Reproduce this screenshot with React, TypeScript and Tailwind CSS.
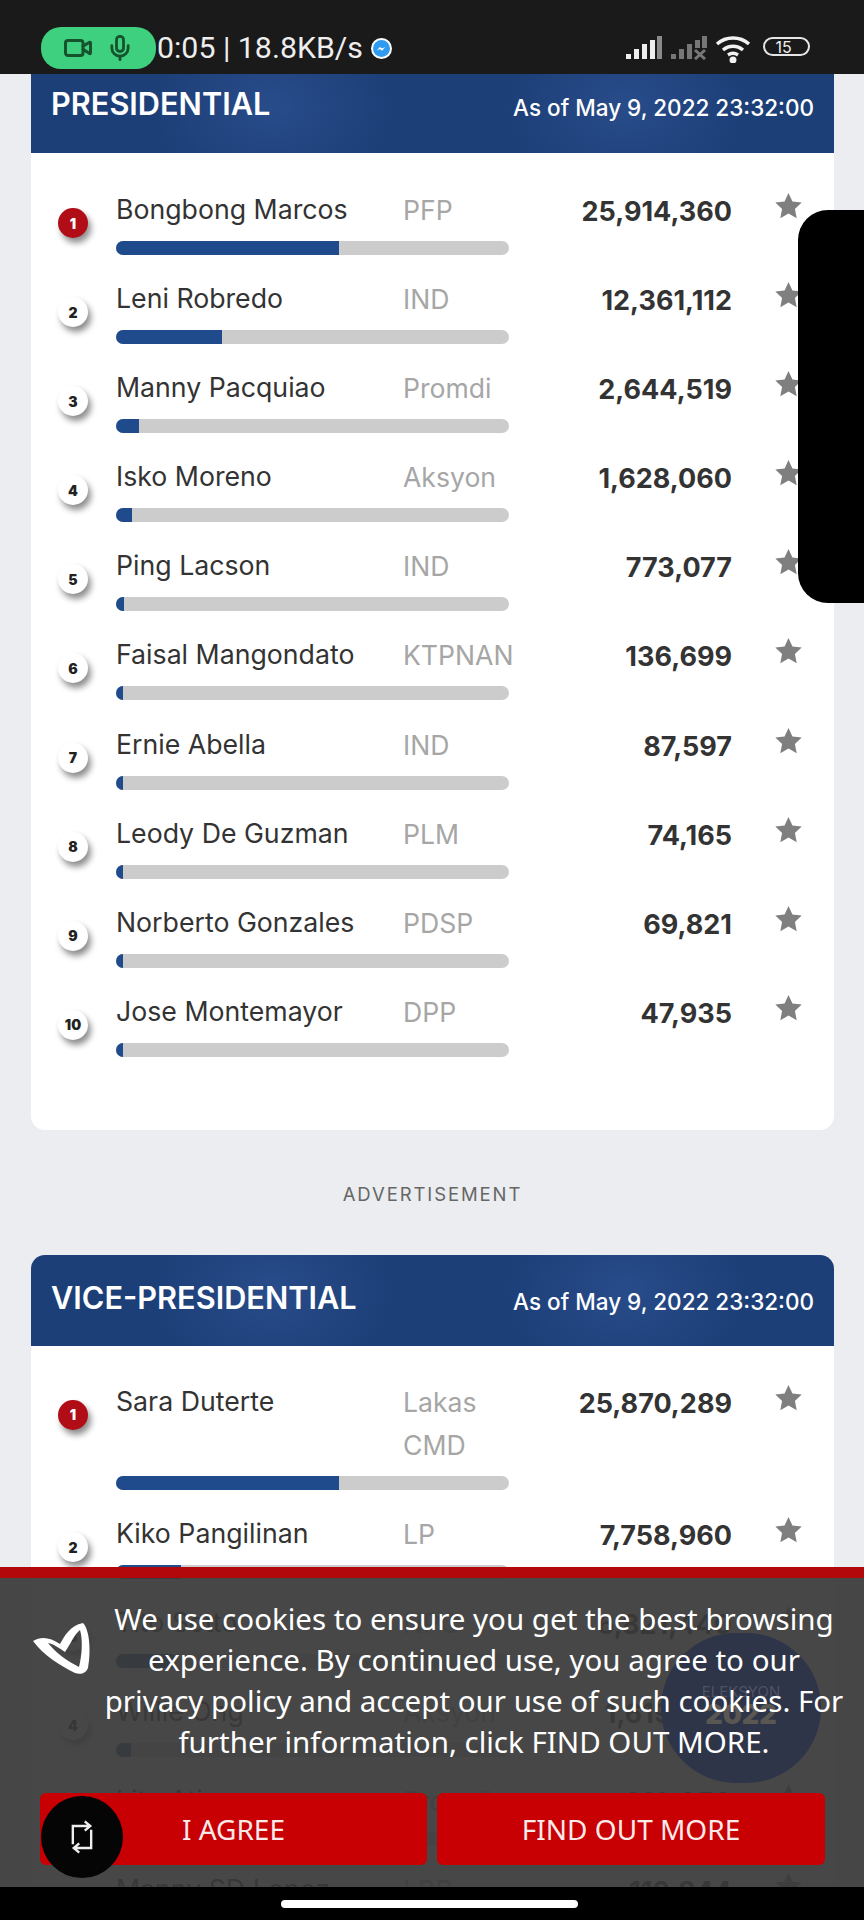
import { Mic, Video } from 'lucide-react';

const BAR_WIDTH = 393;

interface Candidate {
  name: string;
  party: string;
  votes: string;
  fill: number;
}

const presidential: Candidate[] = [
  { name: 'Bongbong Marcos', party: 'PFP', votes: '25,914,360', fill: 223 },
  { name: 'Leni Robredo', party: 'IND', votes: '12,361,112', fill: 106 },
  { name: 'Manny Pacquiao', party: 'Promdi', votes: '2,644,519', fill: 23 },
  { name: 'Isko Moreno', party: 'Aksyon', votes: '1,628,060', fill: 16 },
  { name: 'Ping Lacson', party: 'IND', votes: '773,077', fill: 8 },
  { name: 'Faisal Mangondato', party: 'KTPNAN', votes: '136,699', fill: 7 },
  { name: 'Ernie Abella', party: 'IND', votes: '87,597', fill: 7 },
  { name: 'Leody De Guzman', party: 'PLM', votes: '74,165', fill: 7 },
  { name: 'Norberto Gonzales', party: 'PDSP', votes: '69,821', fill: 7 },
  { name: 'Jose Montemayor', party: 'DPP', votes: '47,935', fill: 7 },
];

const vicePresidential: Candidate[] = [
  { name: 'Sara Duterte', party: 'Lakas CMD', votes: '25,870,289', fill: 223 },
  { name: 'Kiko Pangilinan', party: 'LP', votes: '7,758,960', fill: 65 },
  { name: 'Tito Sotto', party: 'NPC', votes: '6,821,440', fill: 58 },
  { name: 'Willie Ong', party: 'Aksyon', votes: '1,619,330', fill: 15 },
  { name: 'Lito Atienza', party: 'Promdi', votes: '210,250', fill: 8 },
  { name: 'Manny SD Lopez', party: 'LBP', votes: '112,844', fill: 7 },
];

const Star = () => (
  <svg viewBox="0 0 24 24" className="mt-[4px] ml-[43px] h-[27px] w-[27px] shrink-0 fill-[#7f7f7f]">
    <path d="M12 .8l3.5 7.6 8.2 1-6 5.7 1.6 8.2L12 19.200l-7.300 4.100 1.600-8.200-6-5.700 8.200-1z" />
  </svg>
);

const Row = ({ rank, candidate }: { rank: number; candidate: Candidate }) => {
  const first = rank === 1;
  return (
    <div className="mb-[22.1px] flex">
      <div
        className={
          'mt-[20px] flex h-[30px] w-[30px] shrink-0 items-center justify-center rounded-full text-[14px] font-black shadow-[3px_5px_6px_rgba(0,0,0,0.45)] ' +
          (first ? 'bg-[#b10d17] text-white' : 'bg-white text-[#222]')
        }
      >
        {rank}
      </div>
      <div className="ml-[28px] flex-1">
        <div className="flex">
          <div className="w-[287px] text-[26.7px] leading-[43px] text-[#333]">{candidate.name}</div>
          <div className="mt-[1px] -mb-[1px] w-[126px] text-[26.6px] leading-[43px] text-[#a6a6a6]">{candidate.party}</div>
          <div className="mt-[2px] -mb-[2px] w-[203px] text-right text-[27px] leading-[43px] font-bold text-[#333]">
            {candidate.votes}
          </div>
          <Star />
        </div>
        <div className="mt-[10px] h-[14px] overflow-hidden rounded-full bg-[#cccccc]" style={{ width: BAR_WIDTH }}>
          <div className="h-full bg-[#1f4a8c]" style={{ width: candidate.fill }} />
        </div>
      </div>
    </div>
  );
};

const Header = ({ title, tall, rounded }: { title: string; tall?: boolean; rounded?: boolean }) => (
  <div
    className={
      'flex justify-between bg-[#1d3f78] bg-[radial-gradient(ellipse_120px_90px_at_30%_40%,#284c8a,transparent),radial-gradient(ellipse_120px_90px_at_74%_40%,#284c8a,transparent)] pr-[20px] pl-[20px] text-white ' +
      (tall ? 'h-[91px] items-start pt-[25px] ' : 'h-[79px] items-start pt-[12px] ') +
      (rounded ? 'rounded-t-[14px]' : '')
    }
  >
    <div className="text-[30.7px] leading-[36px] font-semibold">{title}</div>
    <div className="pt-[4px] text-[22.5px] leading-[36px] font-medium">As of May 9, 2022 23:32:00</div>
  </div>
);

const StatusBar = () => (
  <div className="relative flex h-[74px] shrink-0 items-start bg-[#1a1a1a] pt-[27px] pl-[41px] text-white">
    <div className="flex h-[42px] w-[115px] items-center justify-center gap-[13px] rounded-[20px] bg-[#3fd07f] text-[#14532d]">
      <Video size={30} strokeWidth={2.4} />
      <Mic size={28} strokeWidth={2.4} />
    </div>
    <div className="ml-[1px] font-['Roboto',sans-serif] text-[30.3px] leading-[42px] text-[#eee]">0:05 | 18.8KB/s</div>
    <div className="mt-[11px] ml-[8px] flex h-[21px] w-[21px] items-center justify-center rounded-full bg-white">
      <svg viewBox="0 0 16 16" className="h-[17px] w-[17px]">
        <circle cx="8" cy="8" r="8" fill="#2f9bf0" />
        <path d="M3.500 10l3-3.500 2 1.500 3-1.500-3 3.500-2-1.500z" fill="#fff" />
      </svg>
    </div>
    <div className="ml-auto mt-[9px] mr-[54px] flex items-start">
      <svg viewBox="0 0 36 24" className="h-[24px] w-[36px]">
        <rect x="0" y="18" width="5" height="5" fill="#eee" />
        <rect x="8" y="13" width="5" height="10" fill="#eee" />
        <rect x="16" y="8" width="5" height="15" fill="#eee" />
        <rect x="24" y="4" width="5" height="19" fill="#eee" />
        <rect x="31" y="0" width="5" height="23" fill="#8a8a8a" />
      </svg>
      <svg viewBox="0 0 36 24" className="ml-[9px] h-[24px] w-[36px]">
        <rect x="0" y="18" width="5" height="5" fill="#777" />
        <rect x="8" y="13" width="5" height="10" fill="#777" />
        <rect x="16" y="8" width="5" height="15" fill="#777" />
        <rect x="24" y="4" width="5" height="8" fill="#777" />
        <rect x="31" y="0" width="5" height="12" fill="#777" />
        <path d="M24 14l10 9M34 14l-10 9" stroke="#777" strokeWidth="3" />
      </svg>
      <svg viewBox="0 0 36 27" className="ml-[8px] h-[27px] w-[36px]" fill="none" stroke="#f2f2f2" strokeWidth="3.400">
        <path d="M2 8c9-8 23-8 32 0" />
        <path d="M8 14c6-5 14-5 20 0" />
        <path d="M13 19c3-2 7-2 10 0" />
        <circle cx="18" cy="24" r="1.800" fill="#f2f2f2" />
      </svg>
      <div className="mt-[1px] ml-[12px] flex h-[19px] w-[47px] items-center justify-center rounded-full border-2 border-[#e5e5e5] pr-[6px] text-[16px] leading-none text-[#eee]">
        15
      </div>
    </div>
  </div>
);

const CookieBar = () => (
  <div className="absolute top-[1567px] right-0 left-0 h-[320px] border-t-[11px] border-[#b80408]/95 bg-[#393939]/93">
    <div className="absolute top-[55px] left-[661px] flex h-[150px] w-[160px] flex-col items-center justify-center rounded-full bg-[#2e3548] pb-[4px] font-['Inter',sans-serif]">
      <div className="text-[15px] leading-[18px] text-[#4d5364]">ELEKSYON</div>
      <div className="text-[27px] leading-[28px] font-black text-[#5a5652]">2022</div>
    </div>
    <svg viewBox="0 0 58 52" className="absolute top-[45px] left-[33px] h-[52px] w-[58px]">
      <path
        d="M0 18C8 13 17 14 27 21C31 14 37 2 50 0C57 7 58 30 55 45C53 50 48 52 42 50C28 43 10 32 0 18ZM15 20C22 29 34 38 46 44C49 32 50 17 47 7C41 12 38 20 32 29C26 25 21 21 15 20Z"
        fill="#fff"
        fillRule="evenodd"
      />
    </svg>
    <div className="relative pt-[20px] pr-[16px] pl-[100px] text-center font-['Noto_Sans',sans-serif] text-[29.5px] leading-[41px] whitespace-nowrap text-white">
      <div>We use cookies to ensure you get the best browsing</div>
      <div>experience. By continued use, you agree to our</div>
      <div>privacy policy and accept our use of such cookies. For</div>
      <div>further information, click FIND OUT MORE.</div>
    </div>
    <div className="relative mt-[31px] flex gap-[10px] pr-[39px] pl-[40px] font-['Noto_Sans',sans-serif] text-[28px] text-[#fbeaea]">
      <div className="flex h-[72px] w-[387px] items-center justify-center rounded-[6px] bg-[#c80003]">I AGREE</div>
      <div className="flex h-[72px] flex-1 items-center justify-center rounded-[6px] bg-[#c80003]">FIND OUT MORE</div>
    </div>
  </div>
);

export default function App() {
  return (
    <div className="relative flex h-[1920px] w-[864px] flex-col overflow-hidden bg-[#ebedf0] font-['Inter',sans-serif]">
      <StatusBar />
      <div className="pr-[30px] pl-[31px]">
        <Header title="PRESIDENTIAL" />
        <div className="rounded-b-[14px] bg-white pt-[35px] pb-[51px] pl-[27px]">
          {presidential.map((c, i) => (
            <Row key={c.name} rank={i + 1} candidate={c} />
          ))}
        </div>
        <div className="flex h-[125px] items-center justify-center pt-[4px] text-[18.5px] tracking-[1.9px] text-[#666]">
          ADVERTISEMENT
        </div>
        <Header title="VICE-PRESIDENTIAL" tall rounded />
        <div className="bg-white pt-[34px] pl-[27px]">
          {vicePresidential.map((c, i) => (
            <Row key={c.name} rank={i + 1} candidate={c} />
          ))}
        </div>
      </div>

      <div className="absolute top-[210px] right-0 h-[393px] w-[66px] rounded-l-[30px] bg-black" />

      <CookieBar />

      <div className="absolute top-[1796px] left-[41px] flex h-[82px] w-[82px] items-center justify-center rounded-full bg-[#050505]">
        <svg viewBox="0 0 24 36" className="h-[36px] w-[22px]" fill="none" stroke="#eee" strokeWidth="2.600">
          <path d="M2 26V6h18M15 1l6 5-6 5" />
          <path d="M22 10v20H4M9 25l-6 5 6 5" />
        </svg>
      </div>

      <div className="absolute right-0 bottom-0 left-0 flex h-[33px] items-start justify-center bg-black pt-[13px] pr-[5px]">
        <div className="h-[8px] w-[297px] rounded-full bg-white" />
      </div>
    </div>
  );
}
